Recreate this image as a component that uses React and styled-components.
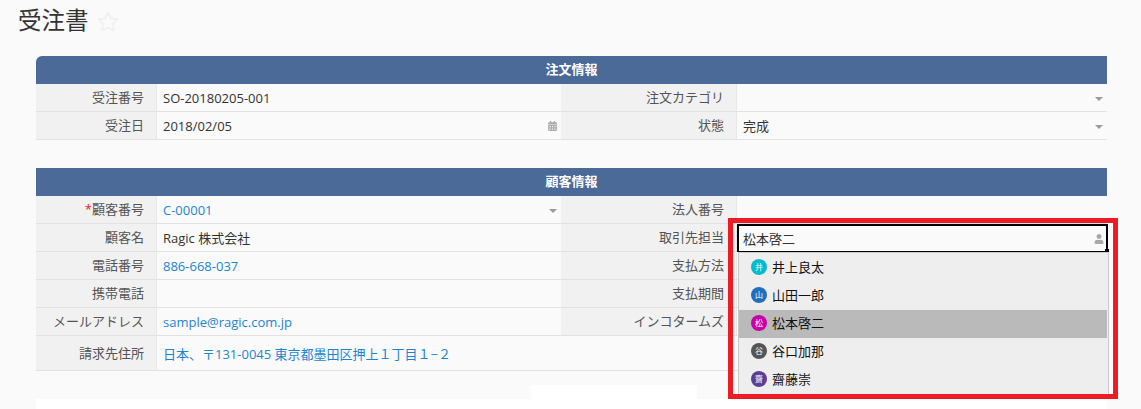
import React from "react";
import styled, { createGlobalStyle } from "styled-components";
import { FaCalendarAlt, FaUser, FaRegStar } from "react-icons/fa";

const Global = createGlobalStyle`
  html, body { margin: 0; padding: 0; background: #fafafa; overflow: hidden; }
  body { font-family: "Open Sans", "Noto Sans CJK JP", sans-serif; font-size: 13px; color: #333; }
`;

const Page = styled.div`
  width: 1141px;
  height: 409px;
  overflow: hidden;
  position: relative;
`;

const TitleBar = styled.div`
  display: flex;
  align-items: center;
  height: 56px;
  padding: 0 0 12px 18px;
  box-sizing: border-box;
`;

const Title = styled.h1`
  margin: -5px 0 0;
  font: 400 23.5px/1 "Noto Sans CJK JP", sans-serif;
  color: #333;
`;

const Star = styled(FaRegStar)`
  margin-left: 8px;
  margin-top: -2px;
  width: 22px;
  height: 21px;
  color: #f0f0f0;
`;

const Section = styled.section`
  margin: 0 34px 28px 36px;
`;

const SectionHeader = styled.div`
  height: 28px;
  background: #4b6a98;
  color: #fff;
  font: 700 13px/26px "Noto Sans CJK JP", sans-serif;
  text-align: center;
  border-radius: ${(p) => (p.$rounded ? "6px 0 0 0" : "0")};
`;

const Row = styled.div`
  display: grid;
  grid-template-columns: 121px 404px 176px 1fr;
  height: ${(p) => p.$height || 28}px;
  box-sizing: border-box;
  border-bottom: 1px solid #e2e2e2;
`;

const WideRow = styled(Row)`
  grid-template-columns: 121px 1fr;
`;

const Label = styled.div`
  background: #f1f1f1;
  border-right: 1px solid #e8e8e8;
  color: #555;
  text-align: right;
  padding-right: 12px;
  line-height: ${(p) => p.$line || 27}px;
  white-space: nowrap;
`;

const Required = styled.span`
  color: #f02020;
`;

const Value = styled.div`
  display: flex;
  align-items: center;
  justify-content: space-between;
  padding: 0 4px 0 6px;
  color: ${(p) => (p.$link ? "#1d85d0" : "#333")};
  white-space: nowrap;
`;

const Caret = styled.span`
  width: 0;
  height: 0;
  margin-top: 2px;
  border-left: 4px solid transparent;
  border-right: 4px solid transparent;
  border-top: 4px solid #9a9a9a;
`;

const Calendar = styled(FaCalendarAlt)`
  width: 9px;
  height: 10px;
  color: #aaa;
`;

const Footer = styled.div`
  margin: -14px 34px 0 36px;
`;

const Tab = styled.div`
  width: 166px;
  height: 14px;
  margin-left: 495px;
  background: #fff;
`;

const Sheet = styled.div`
  height: 40px;
  background: #fff;
`;

const Highlight = styled.div`
  position: absolute;
  left: 728px;
  top: 218px;
  width: 390px;
  height: 181px;
  box-sizing: border-box;
  border: 5px solid #ed1c24;
  overflow: hidden;
`;

const Combo = styled.div`
  position: absolute;
  left: 4px;
  top: 1px;
  width: 371px;
  height: 28px;
  box-sizing: border-box;
  border: 2px solid #000;
  border-bottom-width: 1px;
  background: #fafafa;
  display: flex;
  align-items: center;
  justify-content: space-between;
  padding: 0 2px 0 4px;
  color: #333;
`;

const Handle = styled.span`
  position: absolute;
  right: -3px;
  bottom: -1px;
  width: 4px;
  height: 3px;
  background: #000;
`;

const Person = styled(FaUser)`
  width: 10px;
  height: 10px;
  color: #a8a8a8;
`;

const Menu = styled.div`
  position: absolute;
  left: 5px;
  top: 29px;
  width: 371px;
  height: 160px;
  box-sizing: border-box;
  background: #eeeeee;
  border: 1px solid #c8c8c8;
  padding-top: 1px;
`;

const Option = styled.div`
  display: flex;
  align-items: center;
  height: 28px;
  box-sizing: border-box;
  padding: 0 0 3px 12px;
  margin-right: 1px;
  background: ${(p) => (p.$active ? "#bababa" : "transparent")};
  color: #111;
`;

const Avatar = styled.span`
  width: 16px;
  height: 16px;
  border-radius: 50%;
  margin: 1px 5px 0 0;
  background: ${(p) => p.$color};
  color: #fff;
  font-size: 8px;
  line-height: 16px;
  text-align: center;
  flex: none;
`;

const people = [
  ["井上良太", "#00bcd0"],
  ["山田一郎", "#1f6fc0"],
  ["松本啓二", "#c800a8", true],
  ["谷口加那", "#555555"],
  ["齋藤崇", "#5a3f94"],
];

export default function App() {
  return (
    <Page>
      <Global />
      <TitleBar>
        <Title>受注書</Title>
        <Star />
      </TitleBar>

      <Section>
        <SectionHeader $rounded>注文情報</SectionHeader>
        <Row>
          <Label>受注番号</Label>
          <Value>SO-20180205-001</Value>
          <Label>注文カテゴリ</Label>
          <Value><span /><Caret /></Value>
        </Row>
        <Row>
          <Label>受注日</Label>
          <Value>2018/02/05<Calendar /></Value>
          <Label>状態</Label>
          <Value>完成<Caret /></Value>
        </Row>
      </Section>

      <Section>
        <SectionHeader>顧客情報</SectionHeader>
        <Row>
          <Label><Required>*</Required>顧客番号</Label>
          <Value $link>C-00001<Caret /></Value>
          <Label>法人番号</Label>
          <Value />
        </Row>
        <Row>
          <Label>顧客名</Label>
          <Value>Ragic 株式会社</Value>
          <Label>取引先担当</Label>
          <Value />
        </Row>
        <Row>
          <Label>電話番号</Label>
          <Value $link>886-668-037</Value>
          <Label>支払方法</Label>
          <Value />
        </Row>
        <Row>
          <Label>携帯電話</Label>
          <Value />
          <Label>支払期間</Label>
          <Value />
        </Row>
        <Row>
          <Label>メールアドレス</Label>
          <Value $link>sample@ragic.com.jp</Value>
          <Label>インコタームズ</Label>
          <Value />
        </Row>
        <WideRow $height={35}>
          <Label $line={34}>請求先住所</Label>
          <Value $link>日本、〒131-0045 東京都墨田区押上１丁目１−２</Value>
        </WideRow>
      </Section>

      <Footer>
        <Tab />
        <Sheet />
      </Footer>

      <Highlight>
        <Combo>
          松本啓二
          <Person />
          <Handle />
        </Combo>
        <Menu>
          {people.map(([name, color, active]) => (
            <Option key={name} $active={active}>
              <Avatar $color={color}>{name[0]}</Avatar>
              {name}
            </Option>
          ))}
        </Menu>
      </Highlight>
    </Page>
  );
}
